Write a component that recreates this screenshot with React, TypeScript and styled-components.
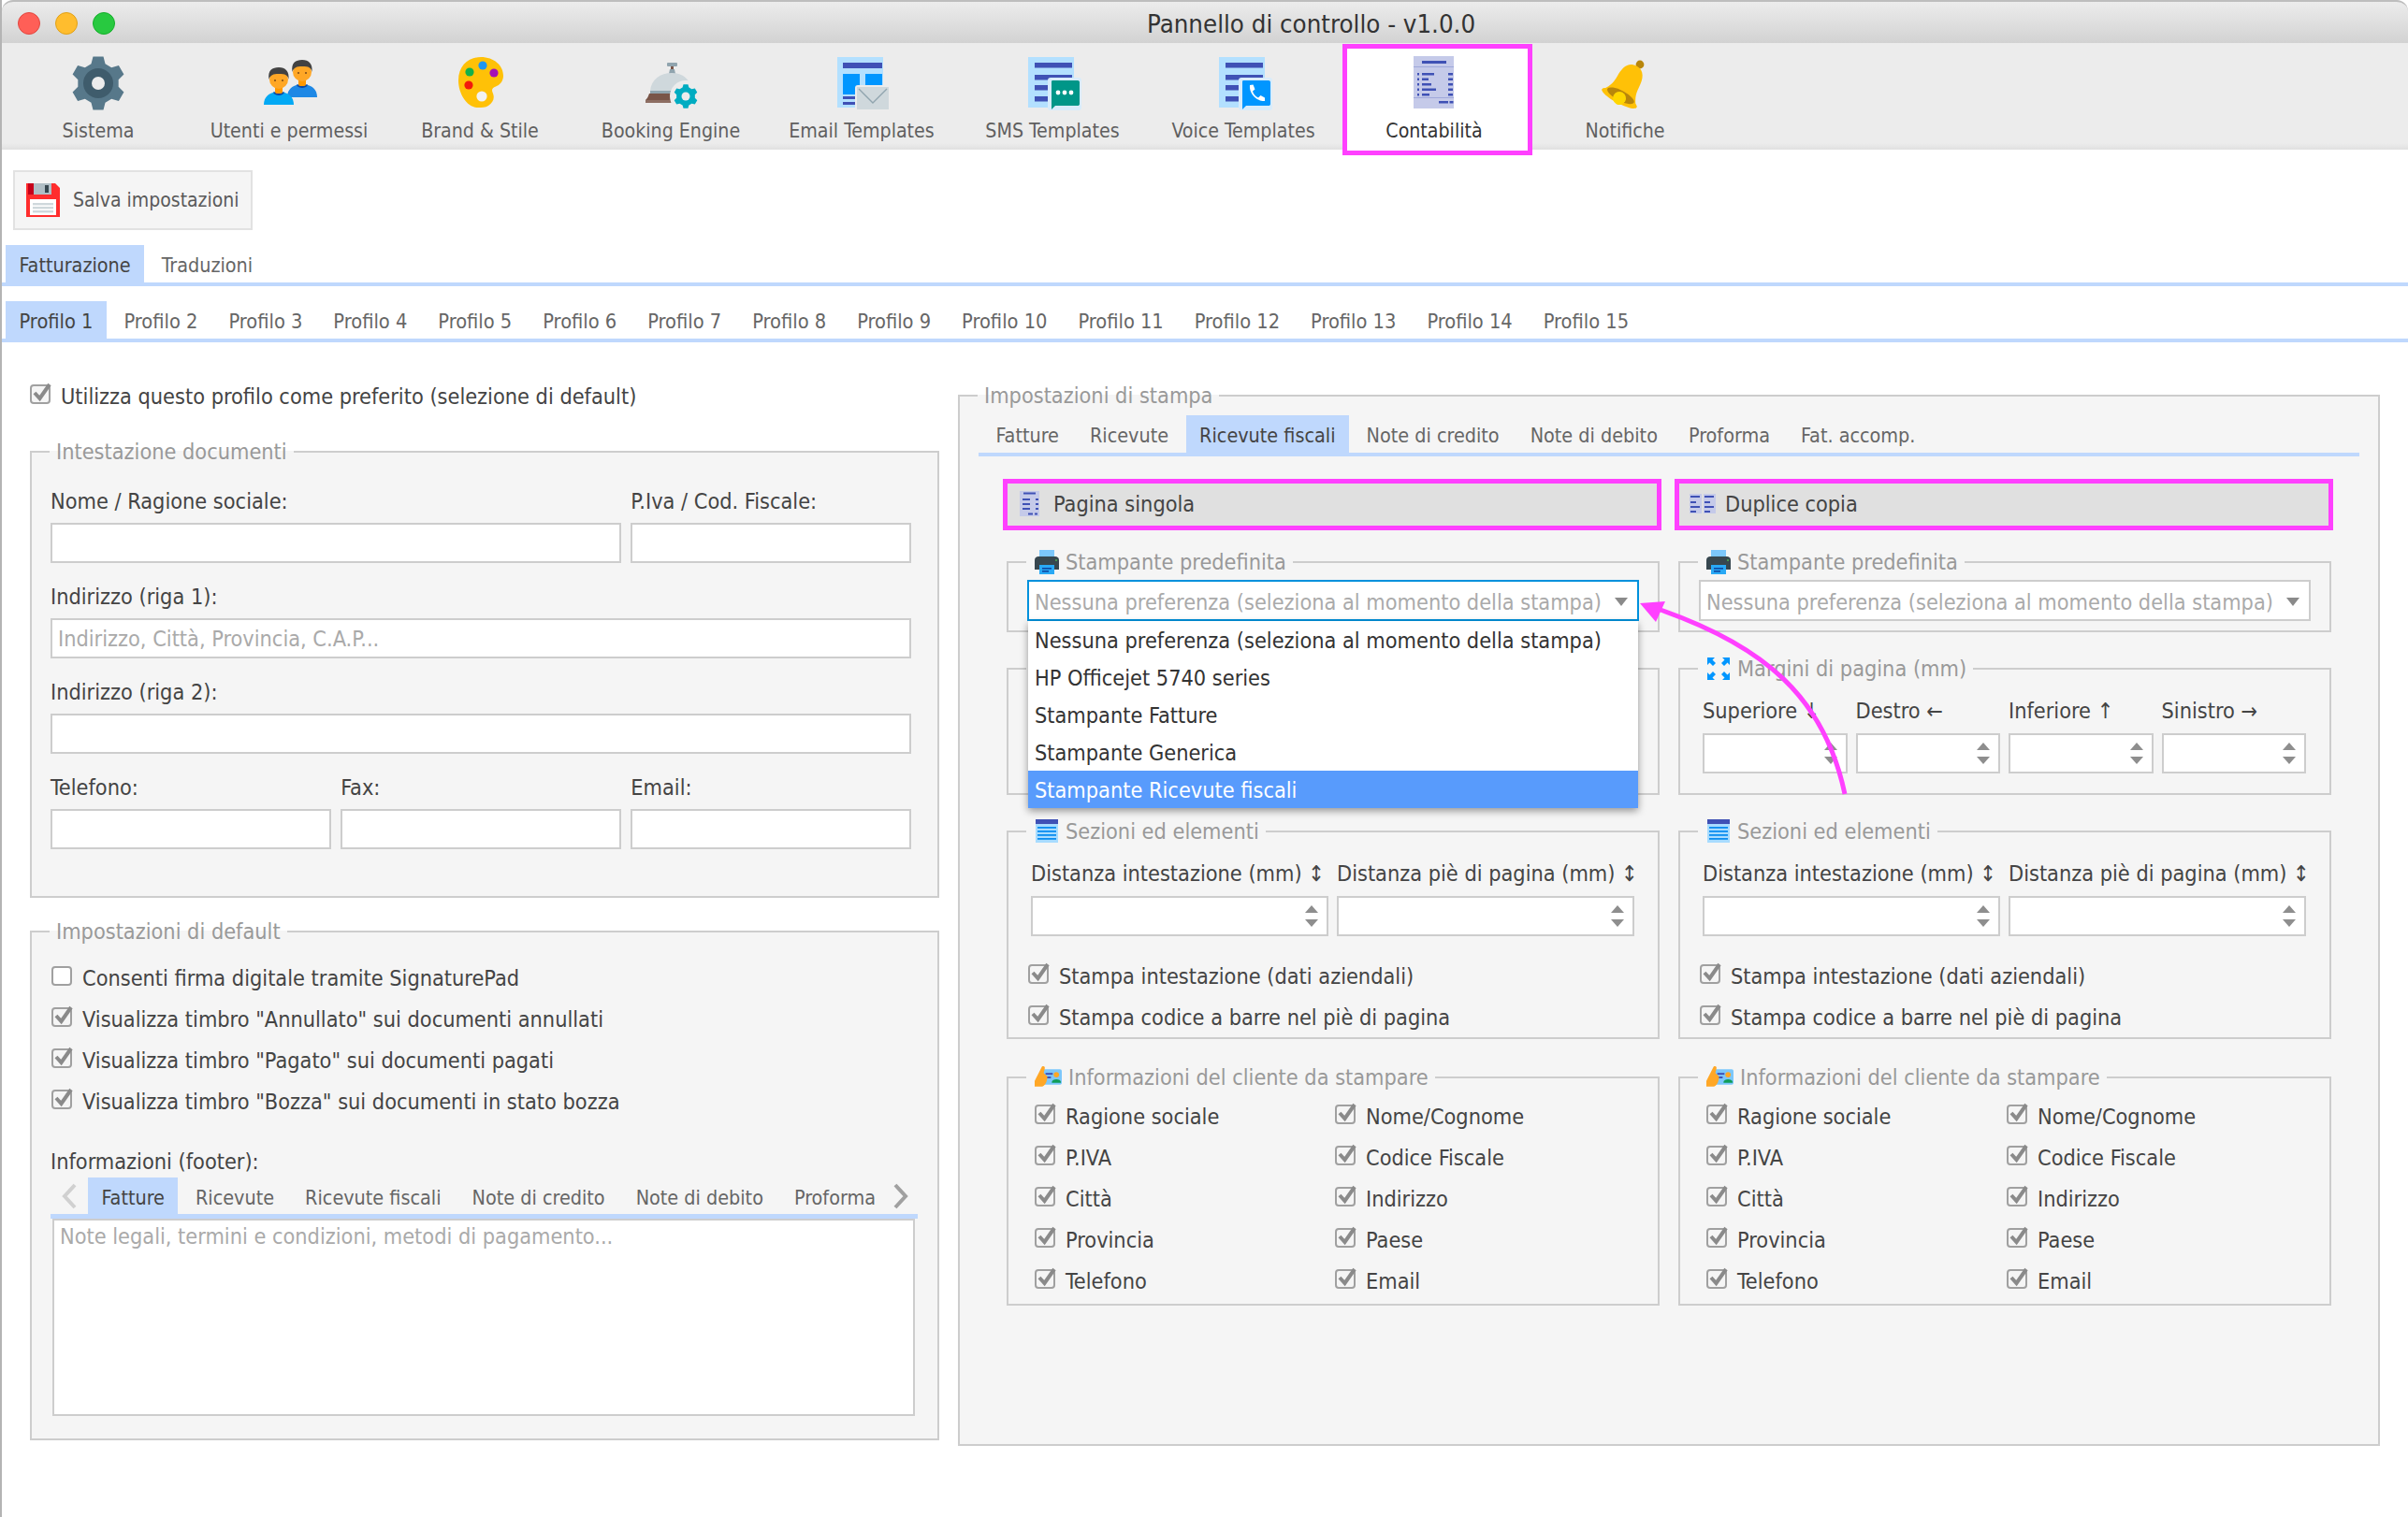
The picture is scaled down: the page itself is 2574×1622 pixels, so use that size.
import React from "react";
import styled, { createGlobalStyle } from "styled-components";

const FONT = `"DejaVu Sans Condensed", "DejaVu Sans", sans-serif`;
const MAGENTA = "#ff40ff";
const LINE = "#cdcdcd";
const TAB = "#bfd8fd";

const Global = createGlobalStyle`
  html, body { margin: 0; padding: 0; background: #fff; }
  body { font-family: ${FONT}; font-size: 23.3px; color: #444; }
  * { box-sizing: border-box; }
`;

const Page = styled.div`
  position: relative;
  width: 2574px;
  height: 1622px;
  overflow: hidden;
  background: #fff;
  border-left: 2px solid #b4b4b4;
`;
const TitleBar = styled.div`
  height: 46px;
  display: flex;
  align-items: center;
  padding: 2px 0 0 17px;
  border-top: 2px solid #bdbdbd;
  border-top-left-radius: 12px;
  border-top-right-radius: 12px;
  background: linear-gradient(#ececec, #d8d8d8 78%, #d2d2d2);
`;
const Light = styled.span<{ $c: string; $b: string }>`
  width: 24px;
  height: 24px;
  margin-right: 16px;
  border-radius: 50%;
  background: ${(p) => p.$c};
  border: 1px solid ${(p) => p.$b};
`;
const Title = styled.div`
  margin-left: 1087px;
  font-size: 27.4px;
  color: #333;
  white-space: nowrap;
`;
const Toolbar = styled.div`
  height: 114px;
  display: flex;
  padding-left: 1px;
  background: linear-gradient(#ececec 94%, #e0e0e0);
`;
const NavItem = styled.div<{ $on?: boolean }>`
  width: ${(p) => (p.$on ? "203px" : "204px")};
  height: ${(p) => (p.$on ? "119px" : "114px")};
  display: flex;
  flex-direction: column;
  align-items: center;
  padding-top: ${(p) => (p.$on ? "6px" : "12px")};
  padding-right: ${(p) => (p.$on ? "7px" : "0")};
  margin: ${(p) => (p.$on ? "1px -3px 0 4px" : "0")};
  background: ${(p) => (p.$on ? "#fff" : "transparent")};
  border: ${(p) => (p.$on ? `5px solid ${MAGENTA}` : "0")};
  position: relative;
  z-index: ${(p) => (p.$on ? 3 : 0)};
`;
const NavLabel = styled.div<{ $on?: boolean }>`
  margin-top: 8px;
  height: 28px;
  line-height: 28px;
  font-size: 21.2px;
  color: ${(p) => (p.$on ? "#333" : "#5f5f5f")};
  white-space: nowrap;
`;
const SaveBtn = styled.div`
  margin: 22px 0 16px 12px;
  width: 256px;
  height: 64px;
  display: flex;
  align-items: center;
  padding-left: 12px;
  gap: 14px;
  background: #f5f5f5;
  border: 2px solid #e2e2e2;
  color: #5a5a5a;
  font-size: 21px;
  white-space: nowrap;
`;
const TabRow = styled.div<{ $ul?: number; $pl?: number; $mt?: number; $w?: number }>`
  display: flex;
  gap: 4px;
  padding-left: ${(p) => p.$pl ?? 4}px;
  width: ${(p) => (p.$w ? `${p.$w}px` : "auto")};
  border-bottom: ${(p) => p.$ul ?? 4}px solid ${TAB};
  margin-top: ${(p) => p.$mt ?? 0}px;
`;
const Tab = styled.div<{ $on?: boolean; $h?: number; $fs?: number }>`
  height: ${(p) => p.$h ?? 40}px;
  padding: 5px 14.5px 0;
  font-size: ${(p) => p.$fs ?? 21.4}px;
  line-height: ${(p) => (p.$h ?? 40) - 6}px;
  background: ${(p) => (p.$on ? TAB : "transparent")};
  color: ${(p) => (p.$on ? "#444" : "#666")};
  white-space: nowrap;
`;
const Main = styled.div`
  display: flex;
  padding-left: 30px;
  gap: 20px;
  align-items: flex-start;
`;
const LeftCol = styled.div`
  width: 972px;
  flex: none;
`;
const Fieldset = styled.fieldset<{ $h: number; $mt?: number; $pt?: number }>`
  margin: ${(p) => p.$mt ?? 0}px 0 0;
  padding: ${(p) => p.$pt ?? 0}px 20px 0;
  height: ${(p) => p.$h}px;
  min-width: 0;
  border: 2px solid ${LINE};
  background: #f5f5f5;
`;
const Legend = styled.legend<{ $pl?: number }>`
  display: inline-flex;
  align-items: center;
  gap: 7px;
  height: 30px;
  padding: 0 7px 1px ${(p) => p.$pl ?? 7}px;
  margin-left: -1px;
  color: #999;
  line-height: 28px;
  white-space: nowrap;
`;
const CheckRow = styled.label<{ $h?: number; $mt?: number; $ml?: number }>`
  display: flex;
  align-items: center;
  gap: 9px;
  height: ${(p) => p.$h ?? 44}px;
  margin: ${(p) => p.$mt ?? 0}px 0 0 ${(p) => p.$ml ?? 0}px;
  white-space: nowrap;
  color: #444;
`;
const FormGrid = styled.div`
  display: grid;
  grid-template-columns: repeat(3, minmax(0, 1fr));
  column-gap: 10.5px;
  row-gap: 21px;
  width: 920px;
`;
const Cell = styled.div<{ $span?: number }>`
  grid-column: span ${(p) => p.$span ?? 1};
  min-width: 0;
`;
const Lbl = styled.div<{ $mb?: number; $mt?: number }>`
  height: 30px;
  line-height: 30px;
  margin-top: ${(p) => p.$mt ?? 0}px;
  margin-bottom: ${(p) => p.$mb ?? 8}px;
  white-space: nowrap;
  color: #444;
`;
const Input = styled.input`
  display: block;
  width: 100%;
  height: 43px;
  padding: 0 6px;
  border: 2px solid ${LINE};
  background: #fff;
  font: inherit;
  outline: 0;
  &::placeholder { color: #aaa; opacity: 1; }
`;
const TextArea = styled.textarea`
  display: block;
  width: 922px;
  height: 211px;
  margin-left: 2px;
  padding: 4px 6px;
  border: 2px solid ${LINE};
  background: #fff;
  font: inherit;
  line-height: 26px;
  resize: none;
  outline: 0;
  &::placeholder { color: #aaa; opacity: 1; }
`;
const Chevron = styled.svg<{ $ml: number; $mr?: number }>`
  flex: none;
  align-self: center;
  margin-left: ${(p) => p.$ml}px;
  margin-right: ${(p) => p.$mr ?? 0}px;
`;
const RightCol = styled.div`
  width: 1520px;
  flex: none;
`;
const Columns = styled.div`
  display: grid;
  grid-template-columns: 704px 704px;
  column-gap: 14px;
  margin: 24px 0 0 26px;
`;
const Column = styled.div``;
const Head = styled.div<{ $double?: boolean }>`
  height: 55px;
  display: flex;
  align-items: center;
  gap: ${(p) => (p.$double ? 10 : 14)}px;
  padding: 0 0 2px ${(p) => (p.$double ? 11 : 13)}px;
  border: 5px solid ${MAGENTA};
  background: #e0e0e0;
  color: #444;
  white-space: nowrap;
`;
const Stack = styled.div`
  margin: 19px 2px 0 4px;
`;
const SelectWrap = styled.div`
  position: relative;
`;
const Select = styled.div<{ $focus?: boolean }>`
  height: 44px;
  display: flex;
  align-items: center;
  justify-content: space-between;
  padding: 2px 10px 0 6px;
  background: #fff;
  border: 2px solid ${(p) => (p.$focus ? "#0091dc" : LINE)};
  color: #aaa;
  white-space: nowrap;
`;
const Menu = styled.div`
  position: absolute;
  left: 1px;
  right: 1px;
  top: 44px;
  z-index: 5;
  background: #fff;
  box-shadow: 0 3px 8px rgba(0, 0, 0, 0.4);
`;
const MenuItem = styled.div<{ $on?: boolean }>`
  height: 40px;
  line-height: 42px;
  padding-left: 7px;
  color: ${(p) => (p.$on ? "#fff" : "#333")};
  background: ${(p) => (p.$on ? "#589bfc" : "#fff")};
  white-space: nowrap;
`;
const Inner = styled.div`
  padding-left: 4px;
`;
const Grid4 = styled.div<{ $cols: number }>`
  display: grid;
  grid-template-columns: repeat(${(p) => p.$cols}, minmax(0, 1fr));
  gap: 0 9px;
  width: 645px;
`;
const SpinBox = styled.div`
  height: 43px;
  display: flex;
  align-items: center;
  justify-content: flex-end;
  padding-right: 9px;
  background: #fff;
  border: 2px solid ${LINE};
`;
const InfoGrid = styled.div`
  display: grid;
  grid-template-columns: 321px 1fr;
  padding-left: 8px;
  margin-top: 4px;
`;
const CheckBoxSvg = styled.svg`
  flex: none;
  margin-top: -5px;
`;

/* ---------- icons ---------- */
const gear = (cx: number, cy: number, R: number, r: number, n = 6, rot = -90) => {
  const pts: string[] = [];
  for (let i = 0; i < n; i++) {
    const a = rot + (i * 360) / n;
    [[-20, r], [-11, R], [11, R], [20, r]].forEach(([d, rad]) => {
      const t = ((a + d) * Math.PI) / 180;
      pts.push(`${(cx + rad * Math.cos(t)).toFixed(2)},${(cy + rad * Math.sin(t)).toFixed(2)}`);
    });
  }
  return pts.join(" ");
};
const NI = (p: { children: React.ReactNode }) => (
  <svg width="64" height="60" viewBox="0 0 64 60">{p.children}</svg>
);
const GearIcon = () => (
  <NI>
    <polygon points={gear(32, 31, 29, 22)} fill="#57788a" />
    <circle cx="32" cy="31" r="16" fill="#3f5c6c" />
    <circle cx="32" cy="31" r="7" fill="#ececec" />
  </NI>
);
const Person = ({ x, y, c, d }: { x: number; y: number; c: string; d: string }) => (
  <g transform={`translate(${x} ${y})`}>
    <path d="M0 40C0 31 6 28 11 26.5H21C26 28 32 31 32 40Z" fill={c} />
    <path d="M10 26.5C11 31 21 31 22 26.5Z" fill={d} />
    <rect x="12" y="19" width="8" height="9" rx="2" fill="#ff9800" />
    <circle cx="16" cy="13" r="10" fill="#ffa726" />
    <path d="M5.5 13C4 3 9 0 16 0C23 0 27.5 4 26.5 13C25.5 8 23 7 16 7C10 7 7 8 5.5 13Z" fill="#424242" />
    <circle cx="12" cy="14" r="1" fill="#784719" />
    <circle cx="20" cy="14" r="1" fill="#784719" />
  </g>
);
const PeopleIcon = () => (
  <NI>
    <Person x={30} y={6} c="#1e88e5" d="#0d47a1" />
    <Person x={5} y={14} c="#03a9f4" d="#0d47a1" />
  </NI>
);
const PaletteIcon = () => (
  <NI>
    <path d="M33 3C47 3 57 12 57 23C57 29 53 33 49 34.5C45 36 44 38 46 42C48 47 46 52 41 55C38 57 34 57 30 57C18 57 9 42 9 28C9 12 20 3 33 3Z" fill="#ffc107" />
    <circle cx="21" cy="19" r="4.6" fill="#14b04a" />
    <circle cx="35" cy="12" r="4.6" fill="#1e96f0" />
    <circle cx="47" cy="20" r="4.6" fill="#a50fb5" />
    <circle cx="20" cy="33" r="4.6" fill="#f21a0c" />
    <circle cx="34" cy="45" r="5.6" fill="#f2f2f2" />
  </NI>
);
const DeskBellIcon = () => (
  <NI>
    <rect x="28" y="9" width="11" height="4" rx="1" fill="#90a4ae" />
    <rect x="32" y="13" width="3" height="4" fill="#795548" />
    <path d="M30 21L31 16H36L37 21Z" fill="#90a4ae" />
    <path d="M10 39C11 27 21 20 33 20C45 20 53 27 55 39Z" fill="#cfd8dc" />
    <rect x="10" y="39" width="34" height="3" fill="#90a4ae" />
    <path d="M9 42H40V49H5C7 47 8 45 9 42Z" fill="#795548" />
    <rect x="5" y="49" width="33" height="3" fill="#8d6e63" />
    <circle cx="48" cy="45" r="17" fill="#ececec" />
    <polygon points={gear(48, 45, 13, 10, 6)} fill="#00acc1" />
    <circle cx="48" cy="45" r="4.5" fill="#ececec" />
  </NI>
);
const Page2 = () => <rect x="6" y="3" width="49" height="54" fill="#b3e0ff" />;
const EmailIcon = () => (
  <NI>
    <Page2 />
    <rect x="12" y="9" width="42" height="6" fill="#3f51b5" />
    <rect x="12" y="21" width="18" height="22" fill="#0096ff" />
    <rect x="36" y="21" width="18" height="22" fill="#0096ff" />
    <rect x="12" y="45" width="13" height="3" fill="#3f51b5" />
    <rect x="12" y="51" width="13" height="3" fill="#3f51b5" />
    <rect x="25" y="33" width="38" height="27" rx="3" fill="#ececec" />
    <rect x="27" y="35" width="34" height="24" fill="#cfd8dc" />
    <path d="M29 37L44 52L59 37" fill="none" stroke="#90a4ae" strokeWidth="1.4" />
  </NI>
);
const Lines = () => (
  <>
    <rect x="13" y="9" width="40" height="5.5" fill="#3f51b5" />
    <rect x="13" y="22" width="40" height="5.5" fill="#3f51b5" />
    <rect x="13" y="33" width="15" height="5.5" fill="#3f51b5" />
    <rect x="13" y="45" width="15" height="5.5" fill="#3f51b5" />
  </>
);
const SmsIcon = () => (
  <NI>
    <Page2 />
    <Lines />
    <rect x="27" y="25" width="36" height="35" rx="3" fill="#d8ecfb" />
    <path d="M32 28H59C60.5 28 61 29 61 30V53C61 54.5 60 55 59 55H35L31 59V30C31 29 31 28 32 28Z" fill="#009688" />
    <circle cx="38" cy="41" r="2.4" fill="#fff" />
    <circle cx="45" cy="41" r="2.4" fill="#fff" />
    <circle cx="52" cy="41" r="2.4" fill="#fff" />
  </NI>
);
const VoiceIcon = () => (
  <NI>
    <Page2 />
    <Lines />
    <rect x="27" y="25" width="36" height="35" rx="3" fill="#d8ecfb" />
    <path d="M32 28H59C60.5 28 61 29 61 30V53C61 54.5 60 55 59 55H35L31 59V30C31 29 31 28 32 28Z" fill="#0096ff" />
    <path d="M39 33L42.5 32.5L44.5 37.5L42 39.5C42.5 42 45 45 48 46.5L50.5 44L55 46.5V50C49 51 38 44 39 33Z" fill="#fff" />
  </NI>
);
const ReceiptIcon = () => (
  <NI>
    <rect x="10" y="2" width="43" height="56" fill="#c5cae9" />
    <rect x="19" y="7" width="26" height="3" fill="#3f51b5" />
    <rect x="10" y="13" width="43" height="1" fill="#9fa8da" />
    {[20, 25.5, 31, 36.5, 42].map((y, i) => (
      <g key={y} fill="#3f51b5">
        <rect x="14" y={y} width="2" height="2.5" />
        <rect x="19" y={y} width={[13, 7, 10, 15, 8][i]} height="2.5" />
        <rect x="47" y={y} width="5" height="2.5" />
      </g>
    ))}
    <rect x="10" y="46" width="43" height="1" fill="#9fa8da" />
    <rect x="37" y="50" width="10" height="2.5" fill="#3f51b5" />
    <rect x="48.5" y="50" width="4" height="2.5" fill="#3f51b5" />
  </NI>
);
const BellIcon = () => (
  <NI>
    <circle cx="48" cy="11" r="4.4" fill="#b8860b" />
    <g transform="translate(34 32) rotate(28)">
      <path d="M0 -22C10 -22 13 -13 13 -3C13 6 16 12 21 18H-21C-16 12 -13 6 -13 -3C-13 -13 -10 -22 0 -22Z" fill="#ffc107" />
      <ellipse cx="0" cy="17" rx="21" ry="5.5" fill="#ffc107" />
      <ellipse cx="0" cy="14" rx="16" ry="5.5" fill="#b8860b" />
      <circle cx="0" cy="17" r="7" fill="#ffd600" />
    </g>
  </NI>
);
const Floppy = () => (
  <svg width="36" height="36" viewBox="0 0 36 36">
    <path d="M0 0H31L36 5V36H0Z" fill="#ff2d2d" />
    <rect x="2" y="0" width="6" height="12" fill="#c6001a" />
    <rect x="8" y="0" width="19" height="12" fill="#b0bec5" />
    <rect x="20" y="2" width="4" height="8" fill="#37474f" />
    <rect x="4" y="17" width="28" height="17" fill="#fff" />
    <rect x="7" y="21" width="22" height="2.4" fill="#cfd8dc" />
    <rect x="7" y="25" width="22" height="2.4" fill="#cfd8dc" />
    <rect x="7" y="29" width="22" height="2.4" fill="#cfd8dc" />
  </svg>
);
const Check = ({ on = true }: { on?: boolean }) => (
  <CheckBoxSvg width="24" height="24" viewBox="0 0 24 24">
    <rect x="1" y="3" width="20" height="19" rx="3" fill={on ? "#f5f5f5" : "#fff"} stroke="#a0a0a0" strokeWidth="2" />
    {on && <path d="M5 11L10.5 17L21 2" fill="none" stroke="#8a8a8a" strokeWidth="4" />}
  </CheckBoxSvg>
);
const PrinterIcon = () => (
  <svg width="26" height="26" viewBox="0 0 26 26">
    <rect x="5" y="0" width="16" height="9" fill="#7cc7fb" />
    <path d="M0 11C0 8 2 7 4 7H22C24 7 26 8 26 11V21H0Z" fill="#37474f" />
    <rect x="5" y="16" width="16" height="10" fill="#29a9f5" />
    <rect x="8" y="19" width="10" height="1.6" fill="#0d47a1" />
    <rect x="8" y="22" width="7" height="1.6" fill="#0d47a1" />
    <circle cx="23" cy="11" r="1" fill="#4caf50" />
  </svg>
);
const ExpandIcon = () => (
  <svg width="26" height="26" viewBox="0 0 26 26" fill="#0096ff">
    <path d="M1 1H9L6.5 3.5L10 7L7 10L3.5 6.5L1 9Z" />
    <path d="M25 1H17L19.5 3.5L16 7L19 10L22.5 6.5L25 9Z" />
    <path d="M1 25H9L6.5 22.5L10 19L7 16L3.5 19.5L1 17Z" />
    <path d="M25 25H17L19.5 22.5L16 19L19 16L22.5 19.5L25 17Z" />
  </svg>
);
const SectionsIcon = () => (
  <svg width="26" height="26" viewBox="0 0 26 26">
    <rect x="1" y="0" width="24" height="25" fill="#a8dcff" />
    <rect x="1" y="0" width="24" height="5" fill="#3f51b5" />
    {[8, 12, 16, 20].map((y) => (
      <rect key={y} x="3" y={y} width="20" height="1.8" fill="#0a8df0" />
    ))}
  </svg>
);
const CardIcon = () => (
  <svg width="29" height="28" viewBox="0 0 30 28">
    <rect x="9" y="5" width="21" height="17" rx="2" fill="#7cc7fb" />
    <rect x="12" y="9" width="8" height="2" fill="#3f51b5" />
    <rect x="12" y="13" width="6" height="2" fill="#3f51b5" />
    <circle cx="24" cy="11" r="3" fill="#ffa726" />
    <path d="M19 19C19 15 29 15 29 19V20H19Z" fill="#0f9d58" />
    <path d="M0 18L8 2C10 1 12 2 11 5L10 9L14 13C14 19 11 24 8 24H0Z" fill="#ffa726" />
  </svg>
);
const PageSingle = () => (
  <svg width="22" height="28" viewBox="0 0 22 28">
    <rect width="21" height="27" fill="#c5cae9" />
    <rect x="4" y="1.5" width="13" height="2" fill="#3f51b5" />
    {[8, 13, 18].map((y) => (
      <g key={y} fill="#3f51b5">
        <rect x="3" y={y} width="8" height="2" />
        <rect x="17" y={y} width="3" height="2" />
      </g>
    ))}
    <rect x="9" y="23.5" width="5" height="2" fill="#3f51b5" />
    <rect x="16" y="23.5" width="3" height="2" fill="#3f51b5" />
  </svg>
);
const PageDouble = () => (
  <svg width="28" height="22" viewBox="0 0 28 22">
    <rect width="13" height="21" fill="#c5cae9" />
    <rect x="15" width="13" height="21" fill="#c5cae9" />
    {[2, 8, 13, 18].map((y, i) => (
      <g key={y} fill="#3f51b5">
        <rect x="1" y={y} width={i % 2 ? 6 : 10} height="2" />
        <rect x="16" y={y} width={i % 2 ? 6 : 10} height="2" />
      </g>
    ))}
  </svg>
);
const Caret = () => (
  <svg width="14" height="9" viewBox="0 0 14 9">
    <path d="M0 0H14L7 9Z" fill="#8a8a8a" />
  </svg>
);
const Spin = () => (
  <svg width="14" height="24" viewBox="0 0 14 24">
    <path d="M0 8L7 0L14 8Z M0 15H14L7 23Z" fill="#8e8e8e" />
  </svg>
);

/* ---------- data ---------- */
const NAV: [string, React.FC][] = [
  ["Sistema", GearIcon],
  ["Utenti e permessi", PeopleIcon],
  ["Brand & Stile", PaletteIcon],
  ["Booking Engine", DeskBellIcon],
  ["Email Templates", EmailIcon],
  ["SMS Templates", SmsIcon],
  ["Voice Templates", VoiceIcon],
  ["Contabilità", ReceiptIcon],
  ["Notifiche", BellIcon],
];
const PROFILES = Array.from({ length: 15 }, (_, i) => `Profilo ${i + 1}`);
const DOCS = ["Fatture", "Ricevute", "Ricevute fiscali", "Note di credito", "Note di debito", "Proforma", "Fat. accomp."];
const PRINTERS = [
  "Nessuna preferenza (seleziona al momento della stampa)",
  "HP Officejet 5740 series",
  "Stampante Fatture",
  "Stampante Generica",
  "Stampante Ricevute fiscali",
];
const CLIENT: [string, string][] = [
  ["Ragione sociale", "Nome/Cognome"],
  ["P.IVA", "Codice Fiscale"],
  ["Città", "Indirizzo"],
  ["Provincia", "Paese"],
  ["Telefono", "Email"],
];
const NO_PREF = PRINTERS[0];

const PrintColumn = ({ double }: { double?: boolean }) => (
  <Column>
    <Head $double={double}>
      {double ? <PageDouble /> : <PageSingle />}
      {double ? "Duplice copia" : "Pagina singola"}
    </Head>
    <Stack>
      <Fieldset $h={90} $pt={4}>
        <Legend $pl={9}>
          <PrinterIcon />
          Stampante predefinita
        </Legend>
        <SelectWrap>
          <Select $focus={!double}>
            {NO_PREF}
            <Caret />
          </Select>
          {!double && (
            <Menu>
              {PRINTERS.map((t, i) => (
                <MenuItem key={t} $on={i === 4}>
                  {t}
                </MenuItem>
              ))}
            </Menu>
          )}
        </SelectWrap>
      </Fieldset>
      <Fieldset $h={150} $mt={24} $pt={15}>
        {/* In the first column this group lies entirely behind the open menu. */}
        <Legend $pl={9}>
          {double && (
            <>
              <ExpandIcon />
              Margini di pagina (mm)
            </>
          )}
        </Legend>
        {double && (
          <Inner>
            <Grid4 $cols={4}>
              {["Superiore ↓", "Destro ←", "Inferiore ↑", "Sinistro →"].map((t) => (
                <div key={t}>
                  <Lbl $mb={9}>{t}</Lbl>
                  <SpinBox>
                    <Spin />
                  </SpinBox>
                </div>
              ))}
            </Grid4>
          </Inner>
        )}
      </Fieldset>
      <Fieldset $h={237} $mt={24} $pt={15}>
        <Legend $pl={9}>
          <SectionsIcon />
          Sezioni ed elementi
        </Legend>
        <Inner>
          <Grid4 $cols={2}>
            {["Distanza intestazione (mm) ↕", "Distanza piè di pagina (mm) ↕"].map((t) => (
              <div key={t}>
                <Lbl $mb={9}>{t}</Lbl>
                <SpinBox>
                  <Spin />
                </SpinBox>
              </div>
            ))}
          </Grid4>
        </Inner>
        <CheckRow $mt={20} $ml={1}>
          <Check />
          Stampa intestazione (dati aziendali)
        </CheckRow>
        <CheckRow $ml={1}>
          <Check />
          Stampa codice a barre nel piè di pagina
        </CheckRow>
      </Fieldset>
      <Fieldset $h={259} $mt={26}>
        <Legend $pl={9}>
          <CardIcon />
          Informazioni del cliente da stampare
        </Legend>
        <InfoGrid>
          {CLIENT.flat().map((t) => (
            <CheckRow key={t}>
              <Check />
              {t}
            </CheckRow>
          ))}
        </InfoGrid>
      </Fieldset>
    </Stack>
  </Column>
);

export default function App() {
  return (
    <>
      <Global />
      <Page>
        <TitleBar>
          <Light $c="#ff5f57" $b="#e2463f" />
          <Light $c="#ffbd2e" $b="#e1a116" />
          <Light $c="#28c940" $b="#14ae2a" />
          <Title>Pannello di controllo - v1.0.0</Title>
        </TitleBar>
        <Toolbar>
          {NAV.map(([t, Icon]) => (
            <NavItem key={t} $on={t === "Contabilità"}>
              <Icon />
              <NavLabel $on={t === "Contabilità"}>{t}</NavLabel>
            </NavItem>
          ))}
        </Toolbar>
        <SaveBtn>
          <Floppy />
          Salva impostazioni
        </SaveBtn>
        <TabRow>
          <Tab $on>Fatturazione</Tab>
          <Tab>Traduzioni</Tab>
        </TabRow>
        <TabRow $mt={16}>
          {PROFILES.map((p, i) => (
            <Tab key={p} $on={i === 0} $fs={21.65}>
              {p}
            </Tab>
          ))}
        </TabRow>
        <Main>
          <LeftCol>
            <CheckRow $h={40} $mt={37}>
              <Check />
              Utilizza questo profilo come preferito (selezione di default)
            </CheckRow>
            <Fieldset $h={492} $mt={25} $pt={23}>
              <Legend>Intestazione documenti</Legend>
              <FormGrid>
                <Cell $span={2}>
                  <Lbl>Nome / Ragione sociale:</Lbl>
                  <Input />
                </Cell>
                <Cell>
                  <Lbl>P.Iva / Cod. Fiscale:</Lbl>
                  <Input />
                </Cell>
                <Cell $span={3}>
                  <Lbl>Indirizzo (riga 1):</Lbl>
                  <Input placeholder="Indirizzo, Città, Provincia, C.A.P..." />
                </Cell>
                <Cell $span={3}>
                  <Lbl>Indirizzo (riga 2):</Lbl>
                  <Input />
                </Cell>
                <Cell>
                  <Lbl>Telefono:</Lbl>
                  <Input />
                </Cell>
                <Cell>
                  <Lbl>Fax:</Lbl>
                  <Input />
                </Cell>
                <Cell>
                  <Lbl>Email:</Lbl>
                  <Input />
                </Cell>
              </FormGrid>
            </Fieldset>
            <Fieldset $h={559} $mt={21} $pt={12}>
              <Legend>Impostazioni di default</Legend>
              <CheckRow $ml={1}>
                <Check on={false} />
                Consenti firma digitale tramite SignaturePad
              </CheckRow>
              <CheckRow $ml={1}>
                <Check />
                Visualizza timbro "Annullato" sui documenti annullati
              </CheckRow>
              <CheckRow $ml={1}>
                <Check />
                Visualizza timbro "Pagato" sui documenti pagati
              </CheckRow>
              <CheckRow $ml={1}>
                <Check />
                Visualizza timbro "Bozza" sui documenti in stato bozza
              </CheckRow>
              <Lbl $mt={28} $mb={2}>Informazioni (footer):</Lbl>
              <TabRow $ul={5} $pl={0} $w={927}>
                <Chevron width="18" height="28" viewBox="0 0 18 28" $ml={11} $mr={7}>
                  <path d="M15 2L4 14L15 26" fill="none" stroke="#d0d0d0" strokeWidth="4" />
                </Chevron>
                {DOCS.slice(0, 6).map((t, i) => (
                  <Tab key={t} $on={i === 0} $h={39}>
                    {t}
                  </Tab>
                ))}
                <Chevron width="18" height="28" viewBox="0 0 18 28" $ml={0}>
                  <path d="M3 2L14 14L3 26" fill="none" stroke="#a0a0a0" strokeWidth="4" />
                </Chevron>
              </TabRow>
              <TextArea placeholder="Note legali, termini e condizioni, metodi di pagamento..." />
            </Fieldset>
          </LeftCol>
          <RightCol>
            <Fieldset $h={1138} $mt={42} $pt={6}>
              <Legend>Impostazioni di stampa</Legend>
              <TabRow>
                {DOCS.map((t, i) => (
                  <Tab key={t} $on={i === 2}>
                    {t}
                  </Tab>
                ))}
              </TabRow>
              <Columns>
                <PrintColumn />
                <PrintColumn double />
              </Columns>
            </Fieldset>
          </RightCol>
        </Main>
        <svg
          width="2574"
          height="1622"
          viewBox="0 0 2574 1622"
          style={{ position: "absolute", left: -2, top: 0, zIndex: 20, pointerEvents: "none" }}
        >
          <path d="M1972 849C1950 745 1885 690 1772 651" fill="none" stroke={MAGENTA} strokeWidth="5" />
          <path d="M1753 645L1780 643L1770 665Z" fill={MAGENTA} />
        </svg>
      </Page>
    </>
  );
}
